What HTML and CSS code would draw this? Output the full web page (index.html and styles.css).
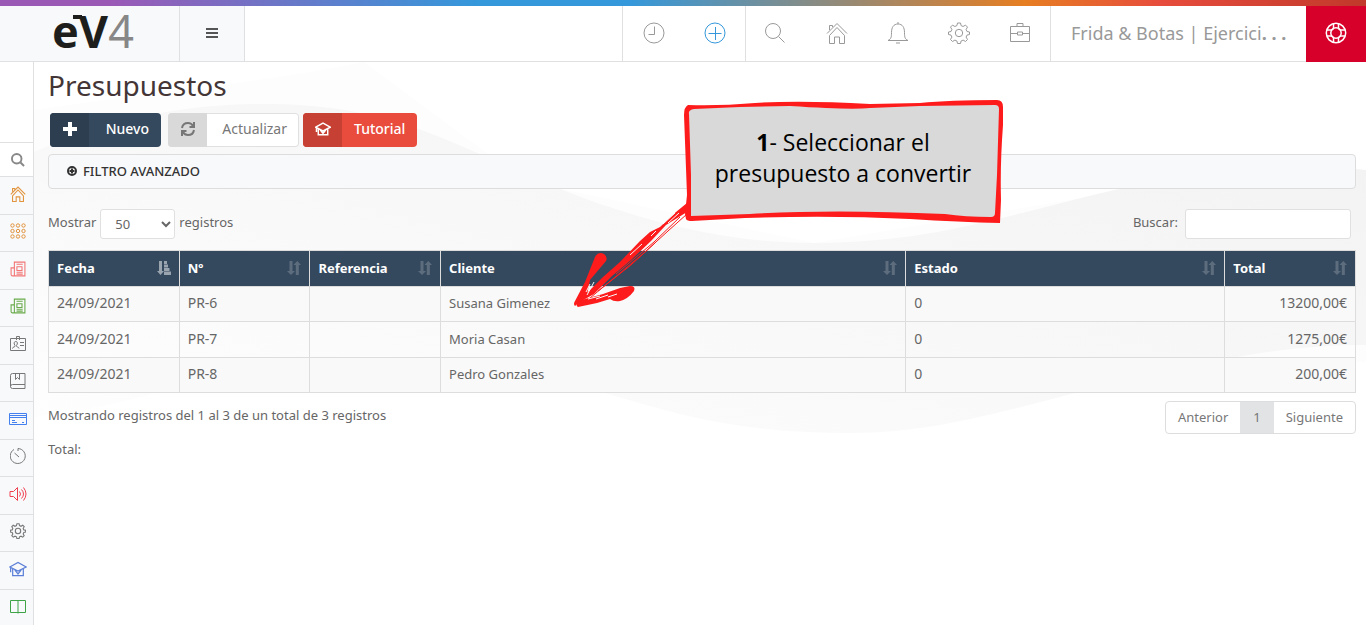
FILE: index.html
```html
<!DOCTYPE html>
<html lang="es">
<head>
<meta charset="utf-8">
<meta name="viewport" content="width=device-width, initial-scale=1">
<title>Presupuestos</title>
<link rel="stylesheet" href="styles.css">
</head>
<body>
<svg class="sprite" aria-hidden="true">
  <symbol id="home" viewBox="0 0 22 22"><path d="M1 11.500L11 1.500l10 10M3.500 13.500v8h5v-6.500h5v6.500h5v-8M3.500 8V3.500h3V5M3.500 13.500l7.500-8 7.500 8"/></symbol>
  <symbol id="gear" viewBox="0 0 22 22"><circle cx="11" cy="11" r="3.700"/><path d="M9.500 1h3l.6 2.600 2 .9 2.400-1.400 2 2-1.400 2.400.9 2L21.500 10v2.500l-2.500.6-.9 2 1.400 2.400-2 2-2.400-1.400-2 .9-.6 2.500h-3l-.6-2.500-2-.9-2.400 1.400-2-2 1.400-2.400-.9-2L.5 12.500V10L3 9.500l.9-2L2.500 5.100l2-2 2.400 1.400 2-.9z"/></symbol>
  <symbol id="search" viewBox="0 0 22 22"><circle cx="9" cy="9" r="7.500"/><path d="M14.500 14.500l6 6"/></symbol>
  <symbol id="cap" viewBox="0 0 22 22"><path d="M1 8.500L11 3l10 5.500-10 5zM4.500 10.500V19h13v-8.500M2 9v6M7 12l4 5 4-5"/></symbol>
  <symbol id="news" viewBox="0 0 22 22"><path d="M6 20.500V1.500h14.500v19zM6 9.500H1.500v9a2 2 0 0 0 2 2H6M9 4.500h8.500M9.500 8h7v5h-7zM9 15.500h8.500M9 18h8.500"/></symbol>
  <symbol id="sort" viewBox="0 0 14 14"><path d="M2.500 0h3v10H8l-4 4-4-4h2.500zM8.800 14V4H6.500L10.300 0 14 4h-2.200v10z"/></symbol>
  <symbol id="sorted" viewBox="0 0 14 14"><path d="M2 0h3v10h2l-3.500 4L0 10h2zM7 0h3v3H7zM7 3.500h4v3H7zM7 7h5.500v3H7zM7 10.500h7V14H7z"/></symbol>
</svg>

<header class="topbar">
  <a class="logo" href="#">eV<span class="logo-4">4</span></a>
  <button class="menu" type="button" aria-label="Menú"><svg class="i14" viewBox="0 0 14 14"><path d="M1 2h12M1 6h12M1 10h12"/></svg></button>
  <nav class="tools" aria-label="Accesos">
    <button class="tool" type="button" aria-label="Historial"><svg class="icon" viewBox="0 0 22 22"><circle cx="11" cy="11" r="10"/><path d="M11.500 4.500v8H5.500"/></svg></button>
    <button class="tool add" type="button" aria-label="Añadir"><svg class="icon" viewBox="0 0 22 22"><circle cx="11" cy="11" r="10"/><path d="M4.500 11.500h13M11.500 5v13"/></svg></button>
    <button class="tool split" type="button" aria-label="Buscar"><svg class="icon"><use href="#search"/></svg></button>
    <button class="tool" type="button" aria-label="Inicio"><svg class="icon"><use href="#home"/></svg></button>
    <button class="tool" type="button" aria-label="Avisos"><svg class="icon" viewBox="0 0 22 22"><path d="M1 18.500c3-1.500 3.500-3 3.500-8 0-5 2-8.500 6.500-8.500s6.500 3.500 6.500 8.500c0 5 .5 6.500 3.500 8zM9 21h4M10 1h2"/></svg></button>
    <button class="tool" type="button" aria-label="Ajustes"><svg class="icon"><use href="#gear"/></svg></button>
    <button class="tool" type="button" aria-label="Empresa"><svg class="icon" viewBox="0 0 22 22"><path d="M1.500 4.500h19v15h-19zM8 4V1.500h6V4M1.500 11.500H8M14 11.500h6.500M8.500 10h5v3h-5z"/></svg></button>
  </nav>
  <a class="company" href="#">Frida &amp; Botas | Ejercici<b>. . .</b></a>
  <button class="help" type="button" aria-label="Ayuda"><svg class="icon" viewBox="0 0 22 22"><circle cx="11" cy="11" r="9.700"/><circle cx="11" cy="11" r="5.200"/><path d="M8.500 2v4.500L6.500 8 2 8M13.500 2v4.500L15.500 8H20M8.500 20v-4.500L6.500 14H2M13.500 20v-4.500l2-1.500H20"/></svg></button>
</header>

<div class="shell">
  <nav class="side" aria-label="Principal">
    <button class="side-search" type="button" aria-label="Buscar en menú"><svg class="i14"><use href="#search"/></svg></button>
    <a class="side-item orange" href="#" aria-label="Inicio"><svg class="i16"><use href="#home"/></svg></a>
    <a class="side-item orange" href="#" aria-label="Aplicaciones"><svg class="i16" viewBox="0 0 16 16"><g class="thin"><circle cx="2.500" cy="2.500" r="1.700"/><circle cx="8" cy="2.500" r="1.700"/><circle cx="13.500" cy="2.500" r="1.700"/><circle cx="2.500" cy="8" r="1.700"/><circle cx="8" cy="8" r="1.700"/><circle cx="13.500" cy="8" r="1.700"/><circle cx="2.500" cy="13.500" r="1.700"/><circle cx="8" cy="13.500" r="1.700"/><circle cx="13.500" cy="13.500" r="1.700"/></g></svg></a>
    <a class="side-item red" href="#" aria-label="Compras"><svg class="i16"><use href="#news"/></svg></a>
    <a class="side-item green" href="#" aria-label="Ventas"><svg class="i16"><use href="#news"/></svg></a>
    <a class="side-item" href="#" aria-label="Contactos"><svg class="i16" viewBox="0 0 16 16"><path class="thin" d="M.5 2.500h15v12H.5zM6.500 4V.5h3V4M2.500 12.500c0-2 3-1 2.500-3-1.500-2-1-4 .8-4s2.200 2 .7 4c-.5 2 2.500 1 2.500 3M10 6.500h4M10 9.500h4"/></svg></a>
    <a class="side-item" href="#" aria-label="Libros"><svg class="i16" viewBox="0 0 16 16"><path class="thin" d="M15 11.500V.5H2.500a2 2 0 0 0-2 2v11a2 2 0 0 0 2 2H15v-4H2.500a2 2 0 0 0-2 2M5.500.5v6l2-2 2 2v-6"/></svg></a>
    <a class="side-item blue" href="#" aria-label="Tesorería"><svg class="i18" viewBox="0 0 18 18"><path class="thin" d="M.5 3.500h17v11H.5zM.5 5.500h17M.5 7.500h17M3 10.500h3M3 12.500h5M13 12.500h2"/></svg></a>
    <a class="side-item" href="#" aria-label="Tiempos"><svg class="i16" viewBox="0 0 16 16"><path class="thin" d="M4 1.500a7.500 7.500 0 1 0 4-1V3M4.500 5L9 9"/></svg></a>
    <a class="side-item alert" href="#" aria-label="Marketing"><svg class="i18" viewBox="0 0 18 18"><path class="thin" d="M1 6.500h3.500l4-4v13l-4-4H1zM10.500 6.500q2 2.500 0 5M12.500 4.500q4 4.500 0 9M14.500 2.500q5 6.500 0 13"/></svg></a>
    <a class="side-item" href="#" aria-label="Configuración"><svg class="i16"><use href="#gear"/></svg></a>
    <a class="side-item indigo" href="#" aria-label="Formación"><svg class="i18"><use href="#cap"/></svg></a>
    <a class="side-item book" href="#" aria-label="Manual"><svg class="i16" viewBox="0 0 16 16"><path class="thin" d="M.5 2.500h15v12H.5zM8 2.500v13"/></svg></a>
  </nav>

  <main class="main">
    <svg class="waves" viewBox="0 0 1332 563" preserveAspectRatio="none" aria-hidden="true">
      <defs><linearGradient id="w" x1="0" y1="1" x2="1" y2="0"><stop offset="0" stop-color="#fefefe"/><stop offset=".5" stop-color="#f8f8f8"/><stop offset="1" stop-color="#f2f2f2"/></linearGradient></defs>
      <path fill="#fdfdfd" d="M0 48C120 30 220 22 330 0H910C1010 30 1190 110 1332 140V300H0z"/>
      <path fill="#fff" d="M330 0H910C1010 30 1190 110 1332 140L1066 133 780 181 490 119z"/>
      <path fill="url(#w)" d="M0 90C80 56 150 42 231 42C370 42 430 90 526 127C620 164 700 181 781 181C900 181 980 151 1076 129C1170 108 1260 99 1332 108V283C1260 283 1190 293 1041 331C950 355 890 371 816 371C700 371 640 351 571 331C480 301 420 294 340 294C220 294 140 330 60 346L0 355z"/>
    </svg>

    <h1 class="title">Presupuestos</h1>
    <div class="actions">
      <button class="btn dark" type="button"><span class="btn-icon"><svg class="i14" viewBox="0 0 14 14"><path class="fat" d="M7 0v14M0 7h14"/></svg></span><span class="btn-text">Nuevo</span></button>
      <button class="btn light" type="button"><span class="btn-icon"><svg class="i14" viewBox="0 0 14 14"><path class="mid" d="M1 6c.5-3 3-5 6-5 2.200 0 4 1 5 3M13 0v5H8.500M13 8c-.5 3-3 5-6 5-2.200 0-4-1-5-3M1 14V9h4.500"/></svg></span><span class="btn-text">Actualizar</span></button>
      <button class="btn coral" type="button"><span class="btn-icon"><svg class="i16 bold"><use href="#cap"/></svg></span><span class="btn-text">Tutorial</span></button>
    </div>

    <button class="filter" type="button"><svg class="filter-icon" viewBox="0 0 10 10"><circle cx="5" cy="5" r="4"/><path d="M5 2.500v5M2.500 5h5"/></svg>FILTRO AVANZADO</button>

    <div class="controls">
      <div class="field"><label for="len">Mostrar</label><select id="len"><option>50</option><option>100</option></select><label for="len">registros</label></div>
      <div class="field find"><label for="q">Buscar:</label><input id="q" type="search"></div>
    </div>

    <table class="grid">
      <colgroup><col class="c1"><col class="c1"><col class="c1"><col><col class="c5"><col class="c1"></colgroup>
      <thead><tr>
        <th><div class="th">Fecha<svg class="i14 on"><use href="#sorted"/></svg></div></th>
        <th><div class="th">Nº<svg class="i14"><use href="#sort"/></svg></div></th>
        <th><div class="th">Referencia<svg class="i14"><use href="#sort"/></svg></div></th>
        <th><div class="th">Cliente<svg class="i14"><use href="#sort"/></svg></div></th>
        <th><div class="th">Estado<svg class="i14"><use href="#sort"/></svg></div></th>
        <th><div class="th">Total<svg class="i14"><use href="#sort"/></svg></div></th>
      </tr></thead>
      <tbody>
        <tr><td class="code">24/09/2021</td><td class="code">PR-6</td><td></td><td>Susana Gimenez</td><td class="code">0</td><td class="code num">13200,00€</td></tr>
        <tr><td class="code">24/09/2021</td><td class="code">PR-7</td><td></td><td>Moria Casan</td><td class="code">0</td><td class="code num">1275,00€</td></tr>
        <tr><td class="code">24/09/2021</td><td class="code">PR-8</td><td></td><td>Pedro Gonzales</td><td class="code">0</td><td class="code num">200,00€</td></tr>
      </tbody>
    </table>

    <div class="foot">
      <p class="info">Mostrando registros del 1 al 3 de un total de 3 registros</p>
      <nav class="pager" aria-label="Páginas"><a href="#">Anterior</a><a class="current" href="#">1</a><a href="#">Siguiente</a></nav>
    </div>
    <p class="sum">Total:</p>

    <aside class="callout">
      <svg class="callout-art" viewBox="0 0 440 226" aria-hidden="true">
        <path fill="#fe1b1b" d="M118 10Q114 12 114 20L117 100 115 119 116 124Q117 126 122 126L175 123Q260 120 340 124Q390 127 430 128L431 105Q430 70 433 30L433 12Q433 5 427 5Q380 5 350 8L300 9Q230 5 185 8Q150 11 118 10z"/>
        <path fill="#d9d9d9" d="M119 19Q118 15 124 14L170 12 220 11Q280 15 300 13L350 11 425 10Q429 10 429 14L427 80 425 118Q425 122 421 122Q395 122 375 119Q260 114 180 119L121 121 121 80z"/>
        <path fill="#fe1b1b" d="M25 162Q28 156 34 159Q38 162 36 166L20 185 17 200 5 211Q3 209 5 206L15 187z"/>
        <path fill="#fe1b1b" d="M8 206L33 199 50 193 60 191Q66 191 64 196Q58 204 50 206Q44 207 40 204L27 208 8 212Q5 210 8 206z"/>
        <path fill="#fe1b1b" d="M117 108L106 117 90 132 80 137 70 146 50 167 33 182 15 200 8 208 24 199 42 181 61 165 81 146 96 130 117 117z"/>
        <path fill="none" stroke="#fe1b1b" stroke-width="1" d="M117 119L98 136 75 157 50 178 20 203M110 122L84 147 46 179M86 147L61 170 28 196"/>
        <path fill="none" stroke="#f7f7f7" stroke-width="1" d="M109 118L98 128M105 118L93 129M86 136L81 141M72 149L60 160M20 189L16 197M24 187L17 200M30 201L18 204M38 200L26 204M47 199L38 202"/>
      </svg>
      <p class="callout-text"><strong>1</strong>- Seleccionar el<br>presupuesto a convertir</p>
    </aside>
  </main>
</div>
</body>
</html>
```
FILE: styles.css
```css
* { box-sizing: border-box; }

body {
  margin: 0;
  background: #fff;
  color: #666;
  font-family: "Noto Sans", "Open Sans", sans-serif;
  font-size: 13px;
  line-height: 20px;
}

button, input, select { font: inherit; color: inherit; }
button { cursor: pointer; }
a { color: inherit; text-decoration: none; }
h1, p { margin: 0; }

.sprite { position: absolute; width: 0; height: 0; }

svg { fill: none; stroke: currentColor; stroke-width: 1; flex: none; }
.icon { width: 22px; height: 22px; }
.i14 { width: 14px; height: 14px; }
.i16 { width: 16px; height: 16px; }
.i18 { width: 18px; height: 18px; }

/* Top bar */
.topbar {
  display: flex;
  height: 62px;
  padding-top: 6px;
  border-bottom: 1px solid #dfe0e2;
  background:
    linear-gradient(90deg, #9b59b6 0, #9b59b6 8%, #3498db 35%, #3498db 46%, #e67e22 75%, #e74c3c 85%, #c0392b 100%) top / 100% 6px no-repeat,
    #fff;
}
.logo {
  position: relative;
  width: 180px;
  padding-left: 52px;
  background: #f8f9fb;
  border-right: 1px solid #dfe0e2;
  color: #1e1f1c;
  font-size: 45px;
  font-weight: 700;
  line-height: 50px;
  white-space: nowrap;
}
.logo::before {
  content: "";
  position: absolute;
  top: 9px;
  left: 73px;
  width: 9px;
  height: 4px;
  background: currentColor;
}
.logo-4 { color: #878787; font-weight: 400; }
.menu {
  display: grid;
  place-items: center;
  width: 65px;
  border: 0;
  border-right: 1px solid #dfe0e2;
  background: #f8f9fb;
  color: #555;
}
.menu svg { stroke-width: 2; }
.tools { display: flex; margin-left: auto; border: solid #dfe0e2; border-width: 0 1px; }
.tool {
  display: grid;
  place-items: center;
  width: 61px;
  padding: 0 0 2px;
  border: 0;
  background: none;
  color: #999;
}
.add { color: #3498db; }
.split { border-left: 1px solid #dfe0e2; padding-right: 2px; }
.company {
  width: 255px;
  padding-left: 20px;
  color: #999;
  font-size: 18px;
  line-height: 54px;
  white-space: nowrap;
  overflow: hidden;
}
.help {
  display: grid;
  place-items: center;
  width: 60px;
  height: 56px;
  padding: 0 0 2px;
  border: 0;
  background: #d6002a;
  color: #fff;
}
.help svg { stroke-width: 1.5; }

/* Side bar */
.shell { display: flex; min-height: calc(100vh - 62px); }
.side {
  flex: none;
  width: 34px;
  height: calc(100vh - 62px);
  padding-top: 80px;
  border-right: 1px solid #dfe0e2;
  background: #fff;
  overflow: hidden;
}
.side-search, .side-item {
  display: grid;
  place-items: center;
  width: 100%;
  height: 38px;
  padding: 0 0 4px 3px;
  border: 0;
  border-top: 1px solid #dfe0e2;
  background: #f8f9fb;
  color: #777;
}
.side-item svg { stroke-width: 1.5; }
.side-item .thin { stroke-width: 1; }
.side-search { height: 34px; padding-bottom: 0; background: #fff; color: #888; }
.side-search svg { stroke-width: 3; }
.side-item:nth-child(odd) { height: 37px; }
.side-item.orange { color: #e2953f; }
.side-item.red { color: #f27575; }
.side-item.green { color: #68ab4b; }
.side-item.blue { color: #4480ee; }
.side-item.alert { color: #f04050; }
.side-item.indigo { color: #5b7fd8; }
.side-item.book { color: #3fa447; }

/* Page */
.main { position: relative; flex: 1; min-width: 0; padding: 6px 10px 20px 14px; }
.main > * { position: relative; }
.main > .waves { position: absolute; inset: 0; width: 100%; height: 563px; stroke: none; }
.title { color: #443636; font-size: 28px; font-weight: 400; line-height: 35px; }

.actions { display: flex; margin: 10px 0 7px 2px; height: 34px; }
.btn {
  display: flex;
  padding: 0;
  border: 0;
  border-radius: 4px;
  font-size: 14px;
  line-height: 32px;
  overflow: hidden;
}
.btn-icon { display: grid; place-items: center; width: 39px; height: 34px; padding-bottom: 2px; }
.btn-text { flex: 1; padding: 0 12px; text-align: right; }
.dark { min-width: 111px; margin-right: 7px; background: #34495e; color: #fff; font-weight: 500; }
.dark .btn-icon { background: #2c3e50; }
.light { min-width: 131px; margin-right: 4px; background: #fff; color: #777; box-shadow: inset 0 0 0 1px #e0e0e0; }
.light .btn-icon { background: #d9d9d9; }
.coral { background: #e94b3c; color: #fff; font-weight: 500; }
.coral .btn-icon { background: #c64133; }
.fat { stroke-width: 4; }
.mid { stroke-width: 2; }
.bold { stroke-width: 2; }

.filter {
  display: flex;
  align-items: center;
  gap: 6px;
  width: 100%;
  height: 35px;
  padding: 0 18px 2px;
  border: 1px solid #ddd;
  border-radius: 4px;
  background: #f8f9fb;
  color: #333;
  font-weight: 500;
}
.filter-icon { width: 10px; height: 10px; stroke-width: 2; }

.controls { display: flex; justify-content: space-between; margin: 20px 5px 11px 0; }
.field { display: flex; gap: 4px; line-height: 27px; }
.find { gap: 7px; }
.field select, .field input {
  height: 30px;
  border: 1px solid #e0e0e0;
  border-radius: 3px;
  background: #fff;
}
.field select { width: 75px; padding: 0 10px; }
.field input { width: 166px; padding: 0 8px; }

.grid { width: 100%; border-collapse: collapse; table-layout: fixed; }
.c1 { width: 10%; }
.c5 { width: 319px; }
.grid th, .grid td { height: 35px; padding: 0 8px 2px; border: 1px solid #ddd; text-align: left; }
.grid th { height: 36px; background: #34495e; color: #fff; font-weight: 700; }
.th { display: flex; align-items: center; justify-content: space-between; }
.th svg { fill: #fff; stroke: none; opacity: .2; }
.th .on { opacity: .5; }
.grid tbody tr:nth-child(odd) { background: #f9f9f9; }
.grid tbody tr:nth-child(even) td { height: 36px; }
.grid .code { font-size: 14px; }
.grid .num { text-align: right; }

.foot { display: flex; justify-content: space-between; margin-top: 8px; }
.info { line-height: 28px; }
.pager { display: flex; border: 1px solid #dcdddf; border-radius: 4px; background: #fff; line-height: 30px; padding-bottom: 0; }
.pager a { height: 31px; padding: 0 12px; color: #777; }
.pager .current { padding: 0 13px; background: #e2e3e5; }
.sum { margin-top: 5px; }

/* Hand-drawn note pointing at the row */
.main > .callout { position: absolute; top: 33px; left: 536px; width: 440px; height: 226px; pointer-events: none; }
.callout-art { display: block; width: 440px; height: 226px; stroke: none; }
.callout-text {
  position: absolute;
  top: 32px;
  left: 117px;
  width: 312px;
  color: #000;
  font-family: "Open Sans", "Noto Sans", sans-serif;
  font-size: 23px;
  line-height: 31px;
  text-align: center;
}
```
